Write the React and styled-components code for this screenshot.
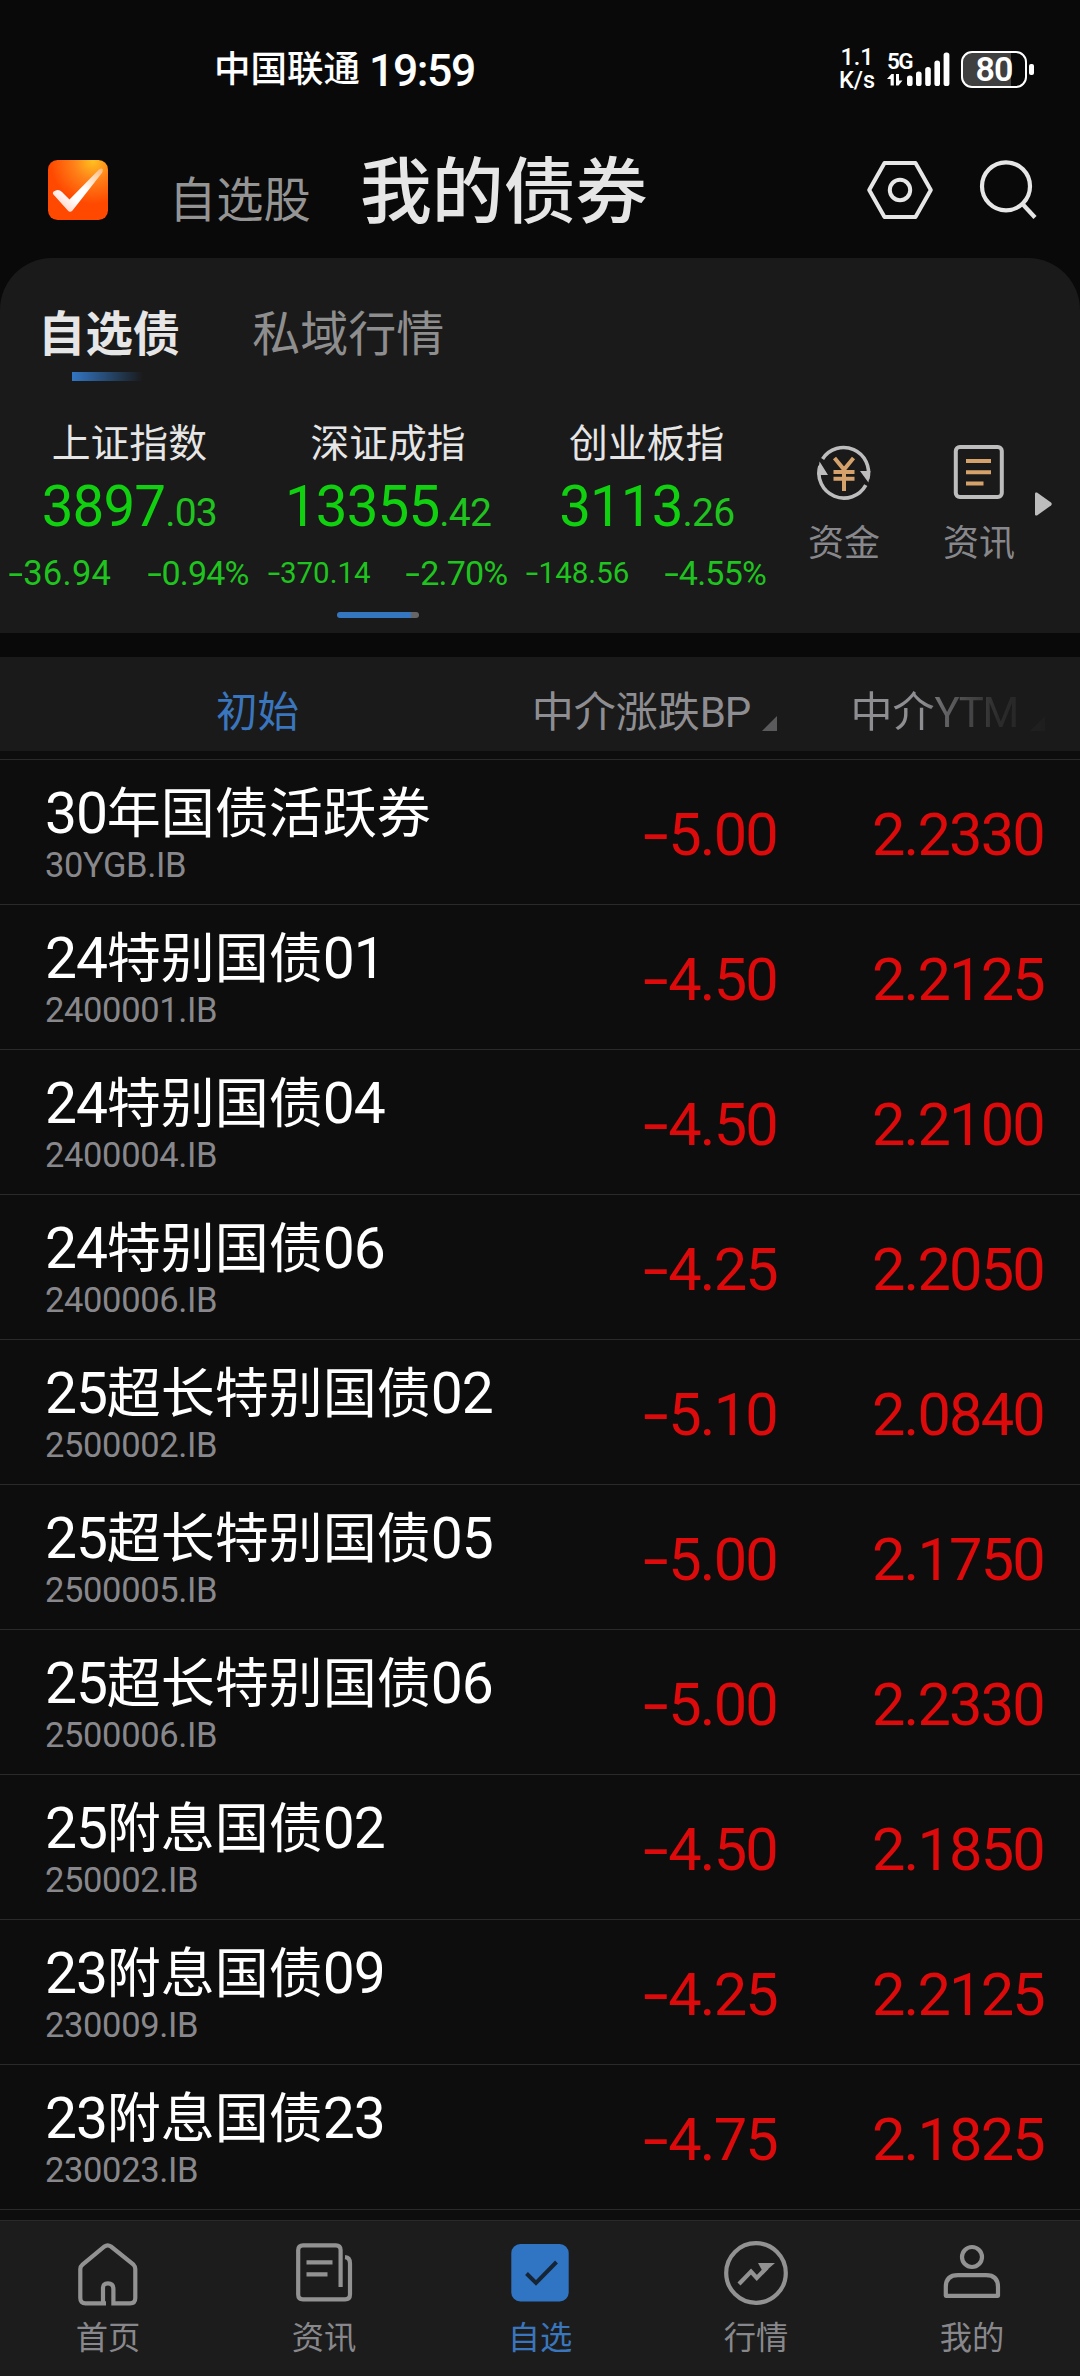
import React from "react";
import styled, { createGlobalStyle } from "styled-components";

const GlobalStyle = createGlobalStyle`
  * { box-sizing: border-box; }
  body {
    margin: 0;
    background: #090909;
    font-family: Roboto, "Noto Sans CJK SC", sans-serif;
  }
`;

const Screen = styled.div`
  display: flex;
  flex-direction: column;
  width: 1080px;
  height: 2376px;
  overflow: hidden;
  background: #090909;
  color: #e6e6e6;
  white-space: nowrap;
`;

const Latin = styled.span`
  font-size: ${(p) => (p.$compact ? "1em" : "1.055em")};
  letter-spacing: ${(p) => (p.$compact ? "-0.03em" : "-0.02em")};
`;

const Dash = styled.span`
  display: inline-block;
  font-family: "DejaVu Sans", sans-serif;
  line-height: 0;
  letter-spacing: 0;
  margin-right: 0.02em;
  transform: scaleX(1.4);
  transform-origin: 60% 50%;
  vertical-align: 0.02em;
`;

/* Splits a label so that its Latin letters and digits get their own metrics. */
function Mixed({ children, compact }) {
  return children
    .split(/([\x20-\x7e]+)/)
    .filter(Boolean)
    .map((part, i) =>
      /^[\x20-\x7e]/.test(part) ? (
        <Latin key={i} $compact={compact}>
          {part}
        </Latin>
      ) : (
        <span key={i}>{part}</span>
      )
    );
}

function Signed({ children }) {
  return children.startsWith("-") ? (
    <>
      <Dash>-</Dash>
      {children.slice(1)}
    </>
  ) : (
    children
  );
}

/* ---------- status bar ---------- */
const StatusBar = styled.div`
  flex: none;
  display: flex;
  justify-content: space-between;
  align-items: center;
  height: 138px;
  padding: 0 46px 0 214px;
  color: #fff;
`;

const Carrier = styled.div`
  display: flex;
  align-items: center;
  gap: 9px;
  padding-top: 2px;
  font-weight: 500;
  font-size: 36.5px;
  line-height: 50px;
`;

const Clock = styled.span`
  font-size: 44.5px;
  letter-spacing: -1.4px;
  padding-top: 1px;
`;

const StatusIcons = styled.div`
  display: flex;
  align-items: center;
`;

const Speed = styled.div`
  width: 38px;
  margin-right: 11px;
  text-align: center;
  font-size: 23.5px;
  font-weight: 500;
  line-height: 23px;
`;

const Network = styled.div`
  display: flex;
  flex-direction: column;
  width: 20px;
  height: 35px;
`;

const NetworkName = styled.span`
  height: 22px;
  font-size: 22.5px;
  font-weight: 600;
  line-height: 18px;
  letter-spacing: -1.5px;
`;

const Battery = styled.div`
  display: flex;
  align-items: center;
  justify-content: center;
  width: 66px;
  height: 37px;
  margin: 0 2px 0 11px;
  border: 2.5px solid #fff;
  border-radius: 11px;
  background: linear-gradient(90deg, #404040 78%, transparent 78%);
  font-size: 34px;
  font-weight: 600;
  letter-spacing: -0.8px;
`;

const BatteryNub = styled.div`
  width: 5px;
  height: 11px;
  border-radius: 2px;
  background: #fff;
`;

/* ---------- header ---------- */
const Header = styled.header`
  flex: none;
  display: flex;
  align-items: center;
  height: 120px;
  padding: 0 42px 16px 48px;
`;

const HeaderTabs = styled.div`
  display: flex;
  align-items: baseline;
  flex: 1;
  gap: 49px;
  padding-left: 61px;
  margin-top: 13px;
`;

const HeaderTab = styled.span`
  font-size: ${(p) => (p.$active ? "71.9px" : "47.3px")};
  font-weight: ${(p) => (p.$active ? 500 : 400)};
  line-height: 90px;
  color: ${(p) => (p.$active ? "#e6e6e6" : "#949494")};
`;

const HeaderActions = styled.div`
  display: flex;
  align-items: center;
  gap: 44px;
`;

/* ---------- index card ---------- */
const Card = styled.section`
  flex: none;
  display: flex;
  flex-direction: column;
  height: 375px;
  border-radius: 52px 52px 0 0;
  background: #1a1a1a;
`;

const SubTabs = styled.div`
  display: flex;
  gap: 72px;
  height: 150px;
  padding: 42px 0 0 38px;
`;

const SubTab = styled.div`
  display: flex;
  flex-direction: column;
  gap: 2px;
  align-items: center;
  font-size: ${(p) => (p.$active ? "47.4px" : "48px")};
  font-weight: ${(p) => (p.$active ? 700 : 400)};
  line-height: 70px;
  color: ${(p) => (p.$active ? "#e6e6e6" : "#8e8e8e")};
`;

const TabUnderline = styled.div`
  width: 71px;
  height: 9px;
  margin-right: 3px;
  background: linear-gradient(90deg, #3276c3, rgba(50, 118, 195, 0));
`;

const IndexRow = styled.div`
  display: flex;
  height: 204px;
`;

const IndexCell = styled.div`
  display: flex;
  flex-direction: column;
  align-items: center;
  width: 258.7px;
  padding: 8px 10px 0 10px;
`;

const IndexName = styled.div`
  font-size: 38.8px;
  line-height: 56px;
  color: #e6e6e6;
`;

const IndexValue = styled.div`
  font-size: 56.5px;
  line-height: 66px;
  margin-top: 2px;
  letter-spacing: -0.9px;
  color: #10d010;
`;

const Decimals = styled.span`
  font-size: 39px;
  letter-spacing: -0.8px;
  color: #1fc41f;
`;

const ChangeRow = styled.div`
  display: flex;
  justify-content: space-between;
  align-items: center;
  align-self: stretch;
  height: 40px;
  margin-top: 7px;
  color: #1fc41f;
`;

const Change = styled.span`
  font-size: ${(p) => p.$size}px;
  letter-spacing: ${(p) => p.$spacing}px;
`;

const Shortcuts = styled.div`
  display: flex;
  align-items: flex-start;
  padding: 36px 0 0 32px;
`;

const Shortcut = styled.div`
  display: flex;
  flex-direction: column;
  align-items: center;
  width: 72px;
  margin-right: ${(p) => p.$gap}px;
  gap: 18px;
  font-size: 36px;
  line-height: 52px;
  color: #88888c;
`;

const MoreArrow = styled.svg`
  margin-top: 48px;
`;

const Pager = styled.div`
  width: 82px;
  height: 6px;
  margin-left: 337px;
  border-radius: 3px;
  background: linear-gradient(90deg, #3576c0 90%, #666 90%);
`;

/* ---------- bond table ---------- */
const TableHead = styled.div`
  flex: none;
  display: flex;
  align-items: center;
  height: 94px;
  margin-top: 24px;
  padding: 18px 35px 2px 0;
  background: #1a1a1a;
  font-size: 42px;
  line-height: 61px;
  color: #8e8e92;
`;

const InitialCell = styled.div`
  width: 515px;
  text-align: center;
  font-size: 41.5px;
  color: #3a76bd;
`;

const SortCell = styled.div`
  display: flex;
  align-items: baseline;
  justify-content: flex-end;
  gap: 12px;
  width: ${(p) => p.$width}px;
  mask-image: ${(p) =>
    p.$fade
      ? "linear-gradient(90deg, #000 54%, rgba(0,0,0,0.62) 63%, rgba(0,0,0,0.4) 71%, rgba(0,0,0,0.15) 83%, rgba(0,0,0,0.08) 100%)"
      : "none"};
`;

const SortMark = styled.svg`
  transform: translateY(4px);
`;

const Rows = styled.main`
  flex: none;
  height: 1469px;
  padding-top: 8px;
  background: #0d0d0d;
`;

const Row = styled.div`
  display: flex;
  align-items: center;
  height: 145px;
  padding: 0 36px 0 45px;
  border-top: 1px solid #2a2a2a;

  &:last-child {
    height: 146px;
    border-bottom: 1px solid #2a2a2a;
  }
`;

const Bond = styled.div`
  flex: 1;
`;

const BondName = styled.div`
  font-size: 54px;
  line-height: 66px;
  color: #fff;
`;

const BondCode = styled.div`
  font-size: 34.5px;
  line-height: 35px;
  letter-spacing: -0.35px;
  color: #88888c;
`;

const Figure = styled.div`
  width: ${(p) => p.$width}px;
  padding-top: 5px;
  text-align: right;
  font-size: 59.5px;
  line-height: 70px;
  letter-spacing: -1.8px;
  color: #dc0a0a;
`;

/* ---------- bottom navigation ---------- */
const BottomNav = styled.nav`
  flex: none;
  display: flex;
  height: 156px;
  border-top: 1px solid #2a2a2a;
  background: #1c1c1c;
`;

const NavItem = styled.div`
  flex: 1;
  display: flex;
  flex-direction: column;
  align-items: center;
  gap: 8px;
  padding-top: 18px;
  font-size: 32.3px;
  line-height: 47px;
  color: ${(p) => (p.$active ? "#3a76bd" : "#88888c")};
`;

const INDICES = [
  { name: "上证指数", whole: "3897", dec: ".03", diff: "-36.94", pct: "-0.94%" },
  { name: "深证成指", whole: "13355", dec: ".42", diff: "-370.14", pct: "-2.70%" },
  { name: "创业板指", whole: "3113", dec: ".26", diff: "-148.56", pct: "-4.55%" },
];

const BONDS = [
  ["30年国债活跃券", "30YGB.IB", "-5.00", "2.2330"],
  ["24特别国债01", "2400001.IB", "-4.50", "2.2125"],
  ["24特别国债04", "2400004.IB", "-4.50", "2.2100"],
  ["24特别国债06", "2400006.IB", "-4.25", "2.2050"],
  ["25超长特别国债02", "2500002.IB", "-5.10", "2.0840"],
  ["25超长特别国债05", "2500005.IB", "-5.00", "2.1750"],
  ["25超长特别国债06", "2500006.IB", "-5.00", "2.2330"],
  ["25附息国债02", "250002.IB", "-4.50", "2.1850"],
  ["23附息国债09", "230009.IB", "-4.25", "2.2125"],
  ["23附息国债23", "230023.IB", "-4.75", "2.1825"],
];

const AppLogo = () => (
  <svg width="60" height="60" viewBox="0 0 60 60">
    <defs>
      <radialGradient id="logoBg" cx="0.75" cy="0.02" r="0.72">
        <stop offset="0" stopColor="#ffc020" />
        <stop offset="0.45" stopColor="#ff8018" />
        <stop offset="1" stopColor="#ff4800" />
      </radialGradient>
      <linearGradient id="logoTick" gradientUnits="userSpaceOnUse" x1="20" y1="52" x2="55" y2="8">
        <stop offset="0" stopColor="#ffd9cc" />
        <stop offset="0.25" stopColor="#fff" />
        <stop offset="0.5" stopColor="#fff" />
        <stop offset="1" stopColor="#ffb878" />
      </linearGradient>
    </defs>
    <rect width="60" height="60" rx="9.5" fill="url(#logoBg)" />
    <path
      d="M5 34Q4 31.5 8.5 30.2Q11.5 29.6 14 32L21.5 39.4L51 9.6Q54 7.4 54.8 9.5Q55 11.5 53.5 13.5L24.5 50.5Q22 53 19.8 50.5Z"
      fill="url(#logoTick)"
    />
  </svg>
);

const Signal = () => (
  <svg width="43" height="35" viewBox="0 0 43 35" fill="#fff">
    <rect x="0" y="23.5" width="5.6" height="10.5" rx="2.6" />
    <rect x="9" y="19.5" width="5.6" height="14.5" rx="2.6" />
    <rect x="18.2" y="15" width="5.6" height="19" rx="2.6" />
    <rect x="27.4" y="8.5" width="5.6" height="25.5" rx="2.6" />
    <rect x="36.6" y="0.5" width="5.8" height="33.5" rx="2.6" />
  </svg>
);

const DataArrows = () => (
  <svg width="16" height="12" viewBox="0 0 16 12" fill="#fff">
    <path d="M0 5L4.5 0H6.8V11.5H3.6V5ZM15.5 6.5L11.5 11.5H9V0H12V6.5Z" />
  </svg>
);

const SettingsIcon = () => (
  <svg width="68" height="60" viewBox="0 0 68 60" fill="none" stroke="#e6e6e6" strokeWidth="4">
    <path d="M18.5 3H49.5L64.8 30L49.5 57H18.5L3.2 30Z" strokeLinejoin="round" />
    <circle cx="34" cy="30" r="10.2" />
  </svg>
);

const SearchIcon = () => (
  <svg width="60" height="62" viewBox="0 0 60 62" fill="none" stroke="#e6e6e6" strokeWidth="4.2">
    <circle cx="28" cy="27.3" r="24" />
    <path d="M44.5 45L57 58.5" />
  </svg>
);

const FundIcon = () => (
  <svg width="56" height="56" viewBox="0 0 56 56" fill="none" strokeWidth="3.6">
    <path d="M6.6 14.9A25 25 0 0 1 51.7 35" stroke="#bdbdbd" />
    <path d="M49.8 41.1A25 25 0 0 1 3.9 22" stroke="#bdbdbd" />
    <path d="M3.6 17.5L12 31H1.5ZM52.4 38.5L44 27H54.5Z" fill="#bdbdbd" />
    <path d="M18.5 14L28 25.5L37.5 14M28 24V47M17.5 27.9H38.5M17.5 34.8H38.5" stroke="#d6a26c" strokeWidth="4" />
  </svg>
);

const ArticleIcon = () => (
  <svg width="56" height="56" viewBox="0 0 56 56" fill="none" strokeWidth="4">
    <rect x="4.8" y="3" width="46" height="50" rx="4" stroke="#bdbdbd" />
    <path d="M15 17H40M15 28.2H40M15 39.4H32.5" stroke="#d6a26c" />
  </svg>
);

const HomeIcon = () => (
  <svg width="68" height="68" viewBox="0 0 68 68" fill="none" stroke="#929292" strokeWidth="4.2">
    <path d="M32 64.3H11.5Q6.3 64.3 6.3 59V30Q6.3 27.5 8.5 25.6L30.5 7.5Q33.6 5.2 37 7.5L59.5 25.6Q61.3 27.5 61.3 30V59Q61.3 64.3 56 64.3H39.4V50Q39.4 44.3 34 44.3T29 50V64.3" />
  </svg>
);

const NewsIcon = () => (
  <svg width="68" height="68" viewBox="0 0 68 68" fill="none" stroke="#929292" strokeWidth="4.2">
    <path d="M50.6 48V11Q50.6 6.4 46 6.4H13Q8.2 6.4 8.2 11V55.5Q8.2 60.3 13 60.3H55Q60 60.3 60 55.5V24.5Q60 18.5 55 18.2" />
    <path d="M16.5 23.3H42.5M16.5 35.3H37.5" />
  </svg>
);

const WatchIcon = () => (
  <svg width="68" height="68" viewBox="0 0 68 68" fill="none">
    <rect x="5.3" y="5" width="57.4" height="57.4" rx="9" fill="#3075c4" />
    <path d="M20.5 34.5L30 44L50.5 23" stroke="#152536" strokeWidth="4" />
  </svg>
);

const MarketIcon = () => (
  <svg width="68" height="68" viewBox="0 0 68 68" fill="none" stroke="#929292" strokeWidth="4.2">
    <circle cx="34" cy="34" r="29.8" />
    <path d="M17 45L29 32.5L34.8 39L45 28.5" />
    <path d="M36 24H53L41.5 34Z" fill="#929292" stroke="none" />
  </svg>
);

const ProfileIcon = () => (
  <svg width="68" height="68" viewBox="0 0 68 68" fill="none" stroke="#929292" strokeWidth="4.2">
    <circle cx="34" cy="18" r="10" />
    <path d="M7.8 56.8V48Q7.8 36.2 20 36.2H48Q60 36.2 60 48V56.8Z" strokeLinejoin="round" />
  </svg>
);

const NAV = [
  ["首页", HomeIcon],
  ["资讯", NewsIcon],
  ["自选", WatchIcon],
  ["行情", MarketIcon],
  ["我的", ProfileIcon],
];

const SortTriangle = () => (
  <SortMark width="15" height="15" viewBox="0 0 15 15">
    <path d="M15 0V15H0Z" fill="#5a5a5c" />
  </SortMark>
);

export default function App() {
  return (
    <Screen>
      <GlobalStyle />
      <StatusBar>
        <Carrier>
          <span>中国联通</span>
          <Clock>19:59</Clock>
        </Carrier>
        <StatusIcons>
          <Speed>
            <div>1.1</div>
            <div>K/s</div>
          </Speed>
          <Network>
            <NetworkName>5G</NetworkName>
            <DataArrows />
          </Network>
          <Signal />
          <Battery>80</Battery>
          <BatteryNub />
        </StatusIcons>
      </StatusBar>

      <Header>
        <AppLogo />
        <HeaderTabs>
          <HeaderTab>自选股</HeaderTab>
          <HeaderTab $active>我的债券</HeaderTab>
        </HeaderTabs>
        <HeaderActions>
          <SettingsIcon />
          <SearchIcon />
        </HeaderActions>
      </Header>

      <Card>
        <SubTabs>
          <SubTab $active>
            自选债
            <TabUnderline />
          </SubTab>
          <SubTab>私域行情</SubTab>
        </SubTabs>
        <IndexRow>
          {INDICES.map((it) => (
            <IndexCell key={it.name}>
              <IndexName>{it.name}</IndexName>
              <IndexValue>
                {it.whole}
                <Decimals>{it.dec}</Decimals>
              </IndexValue>
              <ChangeRow>
                {it.diff.length > 6 ? (
                  <Change $size={29.5} $spacing={0}>
                    <Signed>{it.diff}</Signed>
                  </Change>
                ) : (
                  <Change $size={34.5} $spacing={0.3}>
                    <Signed>{it.diff}</Signed>
                  </Change>
                )}
                <Change $size={34} $spacing={-0.8}>
                  <Signed>{it.pct}</Signed>
                </Change>
              </ChangeRow>
            </IndexCell>
          ))}
          <Shortcuts>
            <Shortcut $gap={63}>
              <FundIcon />
              资金
            </Shortcut>
            <Shortcut $gap={20}>
              <ArticleIcon />
              资讯
            </Shortcut>
            <MoreArrow width="17" height="24" viewBox="0 0 17 24">
              <path d="M0 1.5Q0 0 2 0.6L16 10.5Q17.5 12 16 13.5L2 23.4Q0 24 0 22.5Z" fill="#bdbdbd" />
            </MoreArrow>
          </Shortcuts>
        </IndexRow>
        <Pager />
      </Card>

      <TableHead>
        <InitialCell>初始</InitialCell>
        <SortCell $width={262}>
          <span>
            <Mixed compact>中介涨跌BP</Mixed>
          </span>
          <SortTriangle />
        </SortCell>
        <SortCell $width={268} $fade>
          <span>
            <Mixed compact>中介YTM</Mixed>
          </span>
          <SortTriangle />
        </SortCell>
      </TableHead>

      <Rows>
        {BONDS.map(([name, code, bp, ytm]) => (
          <Row key={name}>
            <Bond>
              <BondName>
                <Mixed>{name}</Mixed>
              </BondName>
              <BondCode>{code}</BondCode>
            </Bond>
            <Figure $width={200}>
              <Signed>{bp}</Signed>
            </Figure>
            <Figure $width={267}>{ytm}</Figure>
          </Row>
        ))}
      </Rows>

      <BottomNav>
        {NAV.map(([label, Icon]) => (
          <NavItem key={label} $active={label === "自选"}>
            <Icon />
            {label}
          </NavItem>
        ))}
      </BottomNav>
    </Screen>
  );
}
